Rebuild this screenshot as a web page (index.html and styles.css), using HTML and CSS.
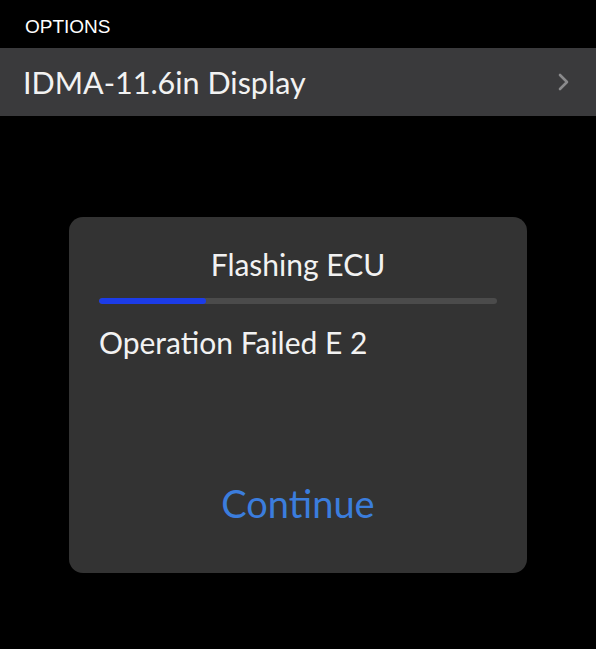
FILE: index.html
```html
<!DOCTYPE html>
<html>
<head>
    <title>Options</title>
    <link rel="stylesheet" href="styles.css">
</head>
<body>
    <div class="section-title">OPTIONS</div>
    <div class="row">
        <span class="row-label">IDMA-11.6in Display</span>
        <svg class="chevron" width="14" height="20" viewBox="0 0 14 20">
            <path d="M3 3 L10 10 L3 17" fill="none" stroke="#8a8a8c" stroke-width="2.6" stroke-linecap="round" stroke-linejoin="round"/>
        </svg>
    </div>
    <div class="dialog">
        <div class="dialog-title">Flashing ECU</div>
        <div class="progress"><div class="progress-fill" style="width: 27%"></div></div>
        <div class="dialog-message">Operation Failed E 2</div>
        <div class="dialog-button">Continue</div>
    </div>
</body>
</html>
```

FILE: styles.css
```css
body {
    margin: 0;
    background-color: #000;
    font-family: Lato, "Open Sans", sans-serif;
    color: #f2f2f2;
}

.section-title {
    height: 48px;
    box-sizing: border-box;
    padding: 17px 0 0 25px;
    font-family: "Liberation Sans", Arial, sans-serif;
    font-size: 19px;
    line-height: 20px;
    color: #fff;
}

.row {
    height: 68px;
    background-color: #3a3a3c;
    display: flex;
    align-items: center;
    justify-content: space-between;
    padding: 0 23px;
}

.row-label {
    font-size: 30.5px;
    line-height: 34px;
    margin-top: -1px;
}

.chevron {
    margin-right: 2px;
}

.dialog {
    margin: 101px 0 0 69px;
    width: 458px;
    height: 356px;
    box-sizing: border-box;
    background-color: #333333;
    border-radius: 14px;
    padding: 27px 30px 0 30px;
    display: flex;
    flex-direction: column;
}

.dialog-title {
    text-align: center;
    font-size: 30px;
    line-height: 40px;
}

.progress {
    margin-top: 14px;
    height: 6px;
    border-radius: 3px;
    background-color: #4b4b4b;
    overflow: hidden;
}

.progress-fill {
    height: 100%;
    border-radius: 3px;
    background-color: #1c3ce8;
}

.dialog-message {
    margin-top: 18px;
    font-size: 30px;
    line-height: 40px;
}

.dialog-button {
    margin-top: 119px;
    text-align: center;
    font-size: 38px;
    line-height: 44px;
    color: #3b7ddd;
}
```
